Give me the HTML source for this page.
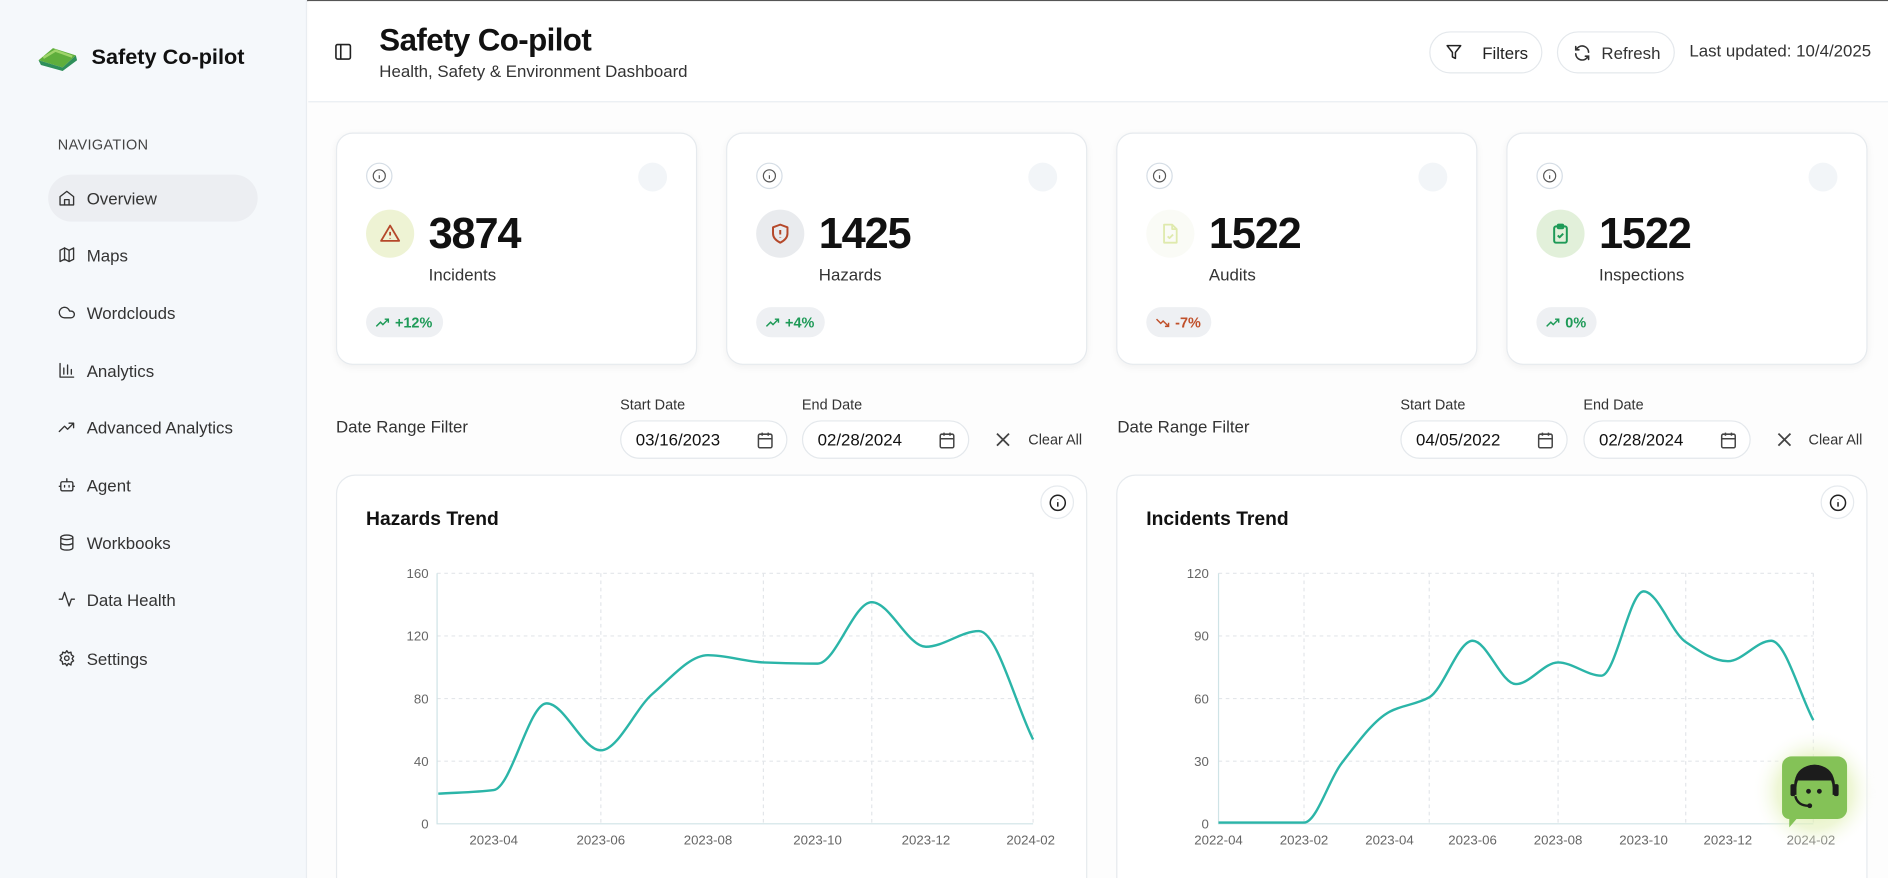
<!DOCTYPE html>
<html><head><meta charset="utf-8">
<style>
*{box-sizing:border-box;margin:0;padding:0}
html,body{width:1888px;height:878px;overflow:hidden;background:#fdfdfd;font-family:"Liberation Sans",sans-serif;color:#111}
#w{position:absolute;left:0;top:0;width:1568px;height:729px;transform:scale(1.20408,1.2044);transform-origin:0 0;overflow:hidden}
.abs{position:absolute}
#side{left:0;top:0;width:255px;height:729px;background:#f5f8fb;border-right:1px solid #e9edf1}
.nav{position:absolute;left:40px;width:174px;height:39px;border-radius:20px;display:flex;align-items:center;padding-left:8px;font-size:14px;color:#333}
.nav svg{width:15px;height:15px;margin-right:9px;fill:none;stroke:#333;stroke-width:1.8;stroke-linecap:round;stroke-linejoin:round}
.card{position:absolute;top:110px;width:300px;height:193px;background:#fff;border:1px solid #e6eaee;border-radius:14px;box-shadow:0 2px 6px rgba(0,0,0,.05)}
.info{position:absolute;left:24px;top:24px;width:22px;height:22px;border:1px solid #d5dde5;border-radius:50%;display:flex;align-items:center;justify-content:center}
.faint{position:absolute;right:24px;top:24px;width:24px;height:24px;border-radius:50%;background:#f2f5f8}
.ic{position:absolute;left:24px;top:63px;width:40px;height:40px;border-radius:50%;display:flex;align-items:center;justify-content:center}
.num{position:absolute;left:76px;top:62px;font-size:36px;font-weight:bold;letter-spacing:-1px}
.lbl{position:absolute;left:76px;top:109px;font-size:14px;color:#333}
.badge{position:absolute;left:24px;top:144px;height:25px;border-radius:13px;background:#eef0f3;font-size:12px;font-weight:bold;display:flex;align-items:center;padding:0 9px 0 8px}
.badge svg{margin-right:4px}
.dl{position:absolute;font-size:12px;color:#333}
.inp{position:absolute;top:349px;width:139px;height:32px;border:1px solid #e4e8ec;border-radius:16px;background:#fff;font-size:14px;display:flex;align-items:center;padding-left:12px;color:#111}
.inp svg{position:absolute;right:10px;top:8px}
.ch{position:absolute;top:394px;width:624px;height:360px;background:#fff;border:1px solid #e6eaee;border-radius:16px}
.ct{position:absolute;left:24px;top:28px;font-size:16px;font-weight:bold}
.ci{position:absolute;right:10px;top:8px;width:28px;height:28px;border-radius:50%;border:1px solid #e6eaee;display:flex;align-items:center;justify-content:center;background:#fff}
.btn{position:absolute;top:26px;height:35px;border:1px solid #e4e8ec;border-radius:18px;background:#fff;display:flex;align-items:center;font-size:14px;color:#222}
</style></head><body>
<div id="w">
<div class="abs" style="left:0;top:0;width:1568px;height:1px;background:#555"></div>
<div id="side" class="abs">
  <svg class="abs" style="left:30px;top:38px" width="36" height="22" viewBox="0 0 36 22"><path d="M2 12 L14 2 L33 8 L22 18 Z" fill="#5fae3c"/><path d="M2 12 L22 18 L33 8 L34 12 L22 21 L4 16Z" fill="#2f8f5a"/><path d="M6 10 L16 4 L30 9" stroke="#9fd46a" stroke-width="2" fill="none"/></svg>
  <div class="abs" style="left:76px;top:37px;font-size:18px;font-weight:bold;color:#111">Safety Co-pilot</div>
  <div class="abs" style="left:48px;top:113px;font-size:12px;color:#444;letter-spacing:.3px">NAVIGATION</div>
  <div class="nav" style="top:145px;background:#eceef2"><svg viewBox="0 0 24 24"><path d="M3 10l9-7 9 7v11H3z"/><path d="M9 21v-7h6v7"/></svg>Overview</div>
  <div class="nav" style="top:192px"><svg viewBox="0 0 24 24"><path d="M3 6l6-3 6 3 6-3v15l-6 3-6-3-6 3z"/><path d="M9 3v15M15 6v15"/></svg>Maps</div>
  <div class="nav" style="top:240px"><svg viewBox="0 0 24 24"><path d="M17.5 19H9a7 7 0 1 1 6.7-9h1.8a4.5 4.5 0 1 1 0 9z"/></svg>Wordclouds</div>
  <div class="nav" style="top:288px"><svg viewBox="0 0 24 24"><path d="M3 3v18h18M8 17V9M13 17V5M18 17v-6"/></svg>Analytics</div>
  <div class="nav" style="top:335px"><svg viewBox="0 0 24 24"><path d="M2 18l7-7 4 4 8-8M15 7h6v6"/></svg>Advanced Analytics</div>
  <div class="nav" style="top:383px"><svg viewBox="0 0 24 24"><rect x="4" y="8" width="16" height="12" rx="2"/><path d="M12 8V4M9 13v2M15 13v2M2 14h2M20 14h2"/></svg>Agent</div>
  <div class="nav" style="top:431px"><svg viewBox="0 0 24 24"><ellipse cx="12" cy="5" rx="8" ry="3"/><path d="M4 5v14c0 1.7 3.6 3 8 3s8-1.3 8-3V5M4 12c0 1.7 3.6 3 8 3s8-1.3 8-3"/></svg>Workbooks</div>
  <div class="nav" style="top:478px"><svg viewBox="0 0 24 24"><path d="M2 12h4l3-9 6 18 3-9h4"/></svg>Data Health</div>
  <div class="nav" style="top:527px"><svg viewBox="0 0 24 24"><circle cx="12" cy="12" r="3"/><path d="M12 2l2 3 3.5-1 .5 3.5 3 2-2 3 2 3-3 2-.5 3.5L14 19l-2 3-2-3-3.5 1L6 16.5l-3-2 2-3-2-3 3-2L6.5 4 10 5z"/></svg>Settings</div>
</div>
<div class="abs" style="left:256px;top:1px;width:1312px;height:84px;background:#fff;border-bottom:1px solid #e9edf1"></div>
<svg class="abs" style="left:277px;top:35px" width="16" height="16" viewBox="0 0 24 24" fill="none" stroke="#222" stroke-width="2"><rect x="3" y="3" width="18" height="18" rx="2"/><path d="M9 3v18"/></svg>
<div class="abs" style="left:315px;top:18px;font-size:26px;font-weight:bold;letter-spacing:-.5px">Safety Co-pilot</div>
<div class="abs" style="left:315px;top:51px;font-size:14px;color:#333">Health, Safety &amp; Environment Dashboard</div>
<div class="btn" style="left:1187px;width:94px"><svg style="margin:0 16px 0 12px" width="15" height="15" viewBox="0 0 24 24" fill="none" stroke="#222" stroke-width="2" stroke-linejoin="round"><path d="M3 3h18l-7 9v8l-4-2v-6z"/></svg>Filters</div>
<div class="btn" style="left:1293px;width:98px;color:#333"><svg style="margin:0 8px 0 12px" width="16" height="16" viewBox="0 0 24 24" fill="none" stroke="#333" stroke-width="2" stroke-linecap="round"><path d="M20 11a8 8 0 0 0-14-5l-2 2M4 4v4h4M4 13a8 8 0 0 0 14 5l2-2M20 20v-4h-4"/></svg>Refresh</div>
<div class="abs" style="left:1403px;top:34px;font-size:14px;color:#333">Last updated: 10/4/2025</div>

<div class="card" style="left:279px"><div class="info"><svg width="12" height="12" viewBox="0 0 24 24" fill="none" stroke="#555" stroke-width="2"><circle cx="12" cy="12" r="10"/><path d="M12 11v6M12 7v.5"/></svg></div><div class="faint"></div>
<div class="ic" style="background:#eef3d4"><svg width="18" height="18" viewBox="0 0 24 24" fill="none" stroke="#b5482a" stroke-width="2" stroke-linejoin="round"><path d="M12 3L2 20h20z"/><path d="M12 10v4M12 17v.5"/></svg></div>
<div class="num">3874</div><div class="lbl">Incidents</div>
<div class="badge" style="color:#1e9a57"><svg width="12" height="10" viewBox="0 0 24 16" fill="none" stroke="#1e9a57" stroke-width="2.4"><path d="M1 14l7-7 4 4 9-9M15 2h6v6"/></svg>+12%</div></div>

<div class="card" style="left:603px"><div class="info"><svg width="12" height="12" viewBox="0 0 24 24" fill="none" stroke="#555" stroke-width="2"><circle cx="12" cy="12" r="10"/><path d="M12 11v6M12 7v.5"/></svg></div><div class="faint"></div>
<div class="ic" style="background:#e9ebee"><svg width="18" height="18" viewBox="0 0 24 24" fill="none" stroke="#b5482a" stroke-width="2.2" stroke-linejoin="round"><path d="M12 2l8 3v7c0 5-4 8-8 10-4-2-8-5-8-10V5z"/><path d="M12 8v5M12 16v.5"/></svg></div>
<div class="num">1425</div><div class="lbl">Hazards</div>
<div class="badge" style="color:#1e9a57"><svg width="12" height="10" viewBox="0 0 24 16" fill="none" stroke="#1e9a57" stroke-width="2.4"><path d="M1 14l7-7 4 4 9-9M15 2h6v6"/></svg>+4%</div></div>

<div class="card" style="left:927px"><div class="info"><svg width="12" height="12" viewBox="0 0 24 24" fill="none" stroke="#555" stroke-width="2"><circle cx="12" cy="12" r="10"/><path d="M12 11v6M12 7v.5"/></svg></div><div class="faint"></div>
<div class="ic" style="background:#fafbf6"><svg width="18" height="20" viewBox="0 0 24 24" fill="none" stroke="#dfeaad" stroke-width="2" stroke-linejoin="round"><path d="M5 2h9l5 5v15H5z"/><path d="M14 2v5h5M9 15l2 2 4-4"/></svg></div>
<div class="num">1522</div><div class="lbl">Audits</div>
<div class="badge" style="color:#c0502a"><svg width="12" height="10" viewBox="0 0 24 16" fill="none" stroke="#c0502a" stroke-width="2.4"><path d="M1 2l7 7 4-4 9 9M15 14h6V8"/></svg>-7%</div></div>

<div class="card" style="left:1251px"><div class="info"><svg width="12" height="12" viewBox="0 0 24 24" fill="none" stroke="#555" stroke-width="2"><circle cx="12" cy="12" r="10"/><path d="M12 11v6M12 7v.5"/></svg></div><div class="faint"></div>
<div class="ic" style="background:#e2f0da"><svg width="18" height="20" viewBox="0 0 24 24" fill="none" stroke="#1e9a57" stroke-width="2.2" stroke-linejoin="round"><rect x="5" y="4" width="14" height="18" rx="2"/><rect x="9" y="2" width="6" height="4" rx="1"/><path d="M9 14l2 2 4-4"/></svg></div>
<div class="num">1522</div><div class="lbl">Inspections</div>
<div class="badge" style="color:#1e9a57"><svg width="12" height="10" viewBox="0 0 24 16" fill="none" stroke="#1e9a57" stroke-width="2.4"><path d="M1 14l7-7 4 4 9-9M15 2h6v6"/></svg>0%</div></div>

<div class="abs" style="left:279px;top:346px;font-size:14px;color:#333">Date Range Filter</div>
<div class="dl" style="left:515px;top:329px">Start Date</div>
<div class="dl" style="left:666px;top:329px">End Date</div>
<div class="inp" style="left:515px">03/16/2023<svg width="15" height="15" viewBox="0 0 24 24" fill="none" stroke="#444" stroke-width="2"><rect x="3" y="4" width="18" height="18" rx="2"/><path d="M3 10h18M8 2v4M16 2v4"/></svg></div>
<div class="inp" style="left:666px">02/28/2024<svg width="15" height="15" viewBox="0 0 24 24" fill="none" stroke="#444" stroke-width="2"><rect x="3" y="4" width="18" height="18" rx="2"/><path d="M3 10h18M8 2v4M16 2v4"/></svg></div>
<svg class="abs" style="left:827px;top:359px" width="12" height="12" viewBox="0 0 12 12" stroke="#444" stroke-width="1.5"><path d="M1 1l10 10M11 1L1 11"/></svg>
<div class="abs" style="left:854px;top:358px;font-size:12px;color:#333">Clear All</div>

<div class="abs" style="left:928px;top:346px;font-size:14px;color:#333">Date Range Filter</div>
<div class="dl" style="left:1163px;top:329px">Start Date</div>
<div class="dl" style="left:1315px;top:329px">End Date</div>
<div class="inp" style="left:1163px">04/05/2022<svg width="15" height="15" viewBox="0 0 24 24" fill="none" stroke="#444" stroke-width="2"><rect x="3" y="4" width="18" height="18" rx="2"/><path d="M3 10h18M8 2v4M16 2v4"/></svg></div>
<div class="inp" style="left:1315px">02/28/2024<svg width="15" height="15" viewBox="0 0 24 24" fill="none" stroke="#444" stroke-width="2"><rect x="3" y="4" width="18" height="18" rx="2"/><path d="M3 10h18M8 2v4M16 2v4"/></svg></div>
<svg class="abs" style="left:1476px;top:359px" width="12" height="12" viewBox="0 0 12 12" stroke="#444" stroke-width="1.5"><path d="M1 1l10 10M11 1L1 11"/></svg>
<div class="abs" style="left:1502px;top:358px;font-size:12px;color:#333">Clear All</div>

<div class="ch" style="left:279px"><div class="ct">Hazards Trend</div><div class="ci"><svg width="15" height="15" viewBox="0 0 24 24" fill="none" stroke="#222" stroke-width="2"><circle cx="12" cy="12" r="10"/><path d="M12 11v6M12 7v.5"/></svg></div></div>
<div class="ch" style="left:927px"><div class="ct">Incidents Trend</div><div class="ci"><svg width="15" height="15" viewBox="0 0 24 24" fill="none" stroke="#222" stroke-width="2"><circle cx="12" cy="12" r="10"/><path d="M12 11v6M12 7v.5"/></svg></div></div>

<svg id="charts" class="abs" style="left:0;top:0" width="1568" height="729" viewBox="0 0 1568 729" font-family="Liberation Sans, sans-serif" font-size="11" fill="#666">
<g stroke="#e3e6ea" stroke-dasharray="3 3" fill="none">
<path d="M363 476H858M363 528H858M363 580H858M363 632H858M499 476V684M634 476V684M724 476V684M858 476V684"/>
<path d="M1012 476H1506M1012 528H1506M1012 580H1506M1012 632H1506M1083 476V684M1187 476V684M1294 476V684M1400 476V684M1506 476V684"/>
</g>
<g stroke="#cfe3e6" fill="none"><path d="M363 476V684H858M1012 476V684H1506"/></g>
<g text-anchor="end"><text x="356" y="480">160</text><text x="356" y="532">120</text><text x="356" y="584">80</text><text x="356" y="636">40</text><text x="356" y="688">0</text>
<text x="1004" y="480">120</text><text x="1004" y="532">90</text><text x="1004" y="584">60</text><text x="1004" y="636">30</text><text x="1004" y="688">0</text></g>
<g text-anchor="middle"><text x="410" y="701">2023-04</text><text x="499" y="701">2023-06</text><text x="588" y="701">2023-08</text><text x="679" y="701">2023-10</text><text x="769" y="701">2023-12</text><text x="856" y="701">2024-02</text>
<text x="1012" y="701">2022-04</text><text x="1083" y="701">2023-02</text><text x="1154" y="701">2023-04</text><text x="1223" y="701">2023-06</text><text x="1294" y="701">2023-08</text><text x="1365" y="701">2023-10</text><text x="1435" y="701">2023-12</text><text x="1504" y="701">2024-02</text></g>
<path id="p1" fill="none" stroke="#2bb5a8" stroke-width="2"/>
<path id="p2" fill="none" stroke="#2bb5a8" stroke-width="2"/>
<defs><radialGradient id="glow"><stop offset="0" stop-color="#d6ea9c" stop-opacity=".9"/><stop offset=".6" stop-color="#e4f1bd" stop-opacity=".6"/><stop offset="1" stop-color="#fff" stop-opacity="0"/></radialGradient></defs>
<circle cx="1507" cy="657" r="52" fill="url(#glow)"/>
<path d="M1488 628h38a8 8 0 0 1 8 8v36a8 8 0 0 1-8 8h-34l-6 7v-7a6 6 0 0 1-6-6v-38a8 8 0 0 1 8-8z" fill="#84c257"/>
<path d="M1490 652a17 17 0 0 1 34 0v8h-2v-6a15 15 0 0 0-30 0v6h-2z" fill="#1c1c1c"/>
<path d="M1491 648a16 13 0 0 1 32 0z" fill="#1c1c1c"/>
<rect x="1487" y="651" width="4" height="10" rx="1.5" fill="#1c1c1c"/><rect x="1523" y="651" width="4" height="10" rx="1.5" fill="#1c1c1c"/>
<circle cx="1502" cy="657" r="2" fill="#1c1c1c"/><circle cx="1511" cy="657" r="2" fill="#1c1c1c"/>
<path d="M1491 661q2 8 11 8" stroke="#1c1c1c" stroke-width="2" fill="none"/><circle cx="1503" cy="669" r="2" fill="#1c1c1c"/>
</svg>
</div>
<script>
function mono(p){var n=p.length,dx=[],s=[],m=[];
for(var i=0;i<n-1;i++){dx[i]=p[i+1][0]-p[i][0];s[i]=(p[i+1][1]-p[i][1])/dx[i];}
m[0]=s[0];m[n-1]=s[n-2];
for(i=1;i<n-1;i++){if(s[i-1]*s[i]<=0)m[i]=0;else{var w1=2*dx[i]+dx[i-1],w2=dx[i]+2*dx[i-1];m[i]=(w1+w2)/(w1/s[i-1]+w2/s[i]);}}
var d="M"+p[0][0]+" "+p[0][1];
for(i=0;i<n-1;i++){var h=dx[i]/3;d+=" C"+(p[i][0]+h)+" "+(p[i][1]+m[i]*h)+" "+(p[i+1][0]-h)+" "+(p[i+1][1]-m[i+1]*h)+" "+p[i+1][0]+" "+p[i+1][1];}
return d;}
document.getElementById("p1").setAttribute("d",mono([[364,659],[410,656],[454,584],[499,623],[542,576],[588,544],[634,550],[679,551],[724,500],[769,537],[813,524],[858,614]]));
document.getElementById("p2").setAttribute("d",mono([[1012,683],[1083,683],[1114,634],[1154,591],[1187,579],[1223,532],[1259,568],[1294,550],[1330,561],[1365,491],[1400,533],[1435,549],[1471,532],[1506,598]]));
</script>
</body></html>
